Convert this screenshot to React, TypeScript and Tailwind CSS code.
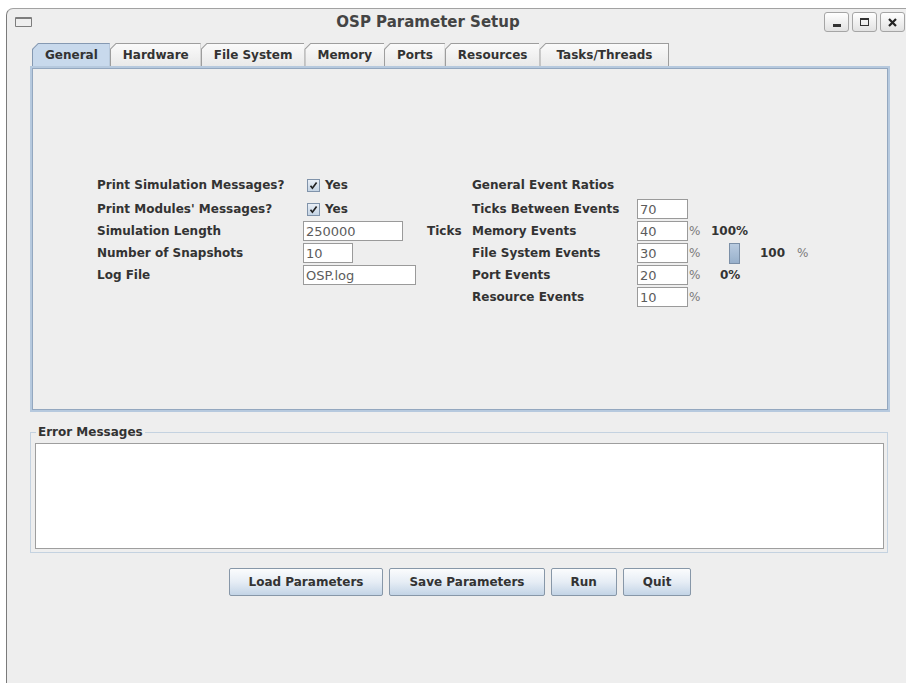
import React from 'react';

const tabs = ['General', 'Hardware', 'File System', 'Memory', 'Ports', 'Resources', 'Tasks/Threads'];

function Tab({ label, selected, last }: { label: string; selected?: boolean; last?: boolean }) {
  return (
    <div
      className={`[clip-path:polygon(6px_0,100%_0,100%_100%,0_100%,0_6px)] pl-px pt-px ${last ? 'pr-px' : ''} ${
        selected ? 'bg-[#8599b2]' : 'bg-[#9d9d9d]'
      }`}
    >
      <div
        className={`[clip-path:polygon(5.4px_0,100%_0,100%_100%,0_100%,0_5.4px)] h-[22px] px-3 flex items-center justify-center text-[12px] font-bold text-[#333] ${
          last ? 'min-w-[128px]' : ''
        } ${selected ? 'bg-[#c8d9ec]' : 'bg-linear-to-b from-[#fafafa] to-[#e9e9e9]'}`}
      >
        {label}
      </div>
    </div>
  );
}

function Check() {
  return (
    <div className="flex items-center pl-[4px] gap-[5px]">
      <span className="w-[13px] h-[13px] border border-[#8093aa] bg-linear-to-b from-[#e9eff6] to-[#c5d4e4] flex items-center justify-center">
        <svg width="9" height="9" viewBox="0 0 9 9">
          <path d="M1.5 4.8 L3.4 7.2 L7.6 1.6" fill="none" stroke="#222" strokeWidth="1.7" />
        </svg>
      </span>
      <span className="font-bold">Yes</span>
    </div>
  );
}

function Field({ value, width }: { value: string; width: string }) {
  return (
    <input
      readOnly
      value={value}
      className={`${width} h-[20px] border border-[#9a9a9a] bg-white pl-[2px] text-[13px] text-[#5c5c5c] outline-none`}
    />
  );
}

function Pct() {
  return <span className="text-[#7a7a7a]">%</span>;
}

export default function App() {
  return (
    <div className="w-[906px] h-[683px] bg-white overflow-hidden font-['DejaVu_Sans',sans-serif]">
      <div className="ml-[6px] mt-[8px] w-[904px] h-[675px] rounded-tl-[7px] border-l border-t border-l-[#7a7a7a] border-t-[#a2a2a2] bg-[#eeeeee]">
        {/* title bar */}
        <div className="h-[26px] flex items-center">
          <div className="ml-[8px] w-[17px] h-[10px] border border-t-2 border-[#7d7d7d] rounded-[1px]" />
          <div className="flex-1 text-center text-[15px] font-bold text-[#444]">OSP Parameter Setup</div>
          <div className="flex gap-[3px] mr-[5px]">
            <div className="w-[25px] h-[20px] border border-[#a5a5a5] rounded-[3px] bg-linear-to-b from-white to-[#e2e2e2] flex items-center justify-center">
              <span className="w-[8px] h-[3px] bg-[#333] mt-[7px]" />
            </div>
            <div className="w-[25px] h-[20px] border border-[#a5a5a5] rounded-[3px] bg-linear-to-b from-white to-[#e2e2e2] flex items-center justify-center">
              <span className="w-[9px] h-[8px] border border-t-2 border-[#333]" />
            </div>
            <div className="w-[25px] h-[20px] border border-[#a5a5a5] rounded-[3px] bg-linear-to-b from-white to-[#e2e2e2] flex items-center justify-center">
              <svg width="9" height="9" viewBox="0 0 9 9">
                <path d="M1 1 L8 8 M8 1 L1 8" stroke="#222" strokeWidth="2.2" />
              </svg>
            </div>
          </div>
        </div>

        <div className="ml-[23px] w-[860px] pt-[8px]">
          {/* tabs */}
          <div className="flex pl-[2px]">
            {tabs.map((t, i) => (
              <Tab key={t} label={t} selected={i === 0} last={i === tabs.length - 1} />
            ))}
          </div>

          {/* General tab */}
          <div className="h-[346px] border-2 border-[#b6c9de]">
            <div className="h-full border border-[#93a7bf] pt-[103px] pl-[64px]">
              <div className="grid grid-cols-[206px_124px_45px_165px_52px_22px_120px] grid-rows-[26px_22px_22px_22px_22px_22px] items-center text-[12px] text-[#333]">
                <span className="font-bold">Print Simulation Messages?</span>
                <Check />
                <span />
                <span className="font-bold">General Event Ratios</span>
                <span className="col-span-3" />

                <span className="font-bold">Print Modules' Messages?</span>
                <Check />
                <span />
                <span className="font-bold">Ticks Between Events</span>
                <Field value="70" width="w-[51px]" />
                <span className="col-span-2" />

                <span className="font-bold">Simulation Length</span>
                <Field value="250000" width="w-[100px]" />
                <span className="font-bold">Ticks</span>
                <span className="font-bold">Memory Events</span>
                <Field value="40" width="w-[51px]" />
                <Pct />
                <span className="font-bold">100%</span>

                <span className="font-bold">Number of Snapshots</span>
                <Field value="10" width="w-[50px]" />
                <span />
                <span className="font-bold">File System Events</span>
                <Field value="30" width="w-[51px]" />
                <Pct />
                <div className="flex items-center pl-[18px]">
                  <span className="w-[11px] h-[21px] border border-[#7b8fa7] bg-linear-to-b from-[#b9cbe0] to-[#98b0cb]" />
                  <span className="ml-[20px] font-bold">100</span>
                  <span className="ml-[12px] text-[#7a7a7a]">%</span>
                </div>

                <span className="font-bold">Log File</span>
                <Field value="OSP.log" width="w-[113px]" />
                <span />
                <span className="font-bold">Port Events</span>
                <Field value="20" width="w-[51px]" />
                <Pct />
                <span className="pl-[9px] font-bold">0%</span>

                <span className="col-span-3" />
                <span className="font-bold">Resource Events</span>
                <Field value="10" width="w-[51px]" />
                <Pct />
                <span />
              </div>
            </div>
          </div>

          {/* error output */}
          <fieldset className="mt-[13px] w-[858px] border border-[#c4d2e0] pl-[4px] pr-[3px] pb-[3px] pt-[4px]">
            <legend className="ml-[1px] px-[2px] text-[12px] leading-[14px] font-bold text-[#333]">Error Messages</legend>
            <div className="h-[106px] bg-white border border-[#9e9e9e]" />
          </fieldset>

          {/* actions */}
          <div className="mt-[15px] flex justify-center gap-[6px]">
            {['Load Parameters', 'Save Parameters', 'Run', 'Quit'].map((b) => (
              <button
                key={b}
                className="h-[28px] px-[19px] border border-[#8797a8] rounded-[2px] bg-linear-to-b from-[#fbfcfd] via-[#e6edf5] to-[#c3d4e6] text-[12px] font-bold text-[#333]"
              >
                {b}
              </button>
            ))}
          </div>
        </div>
      </div>
    </div>
  );
}
